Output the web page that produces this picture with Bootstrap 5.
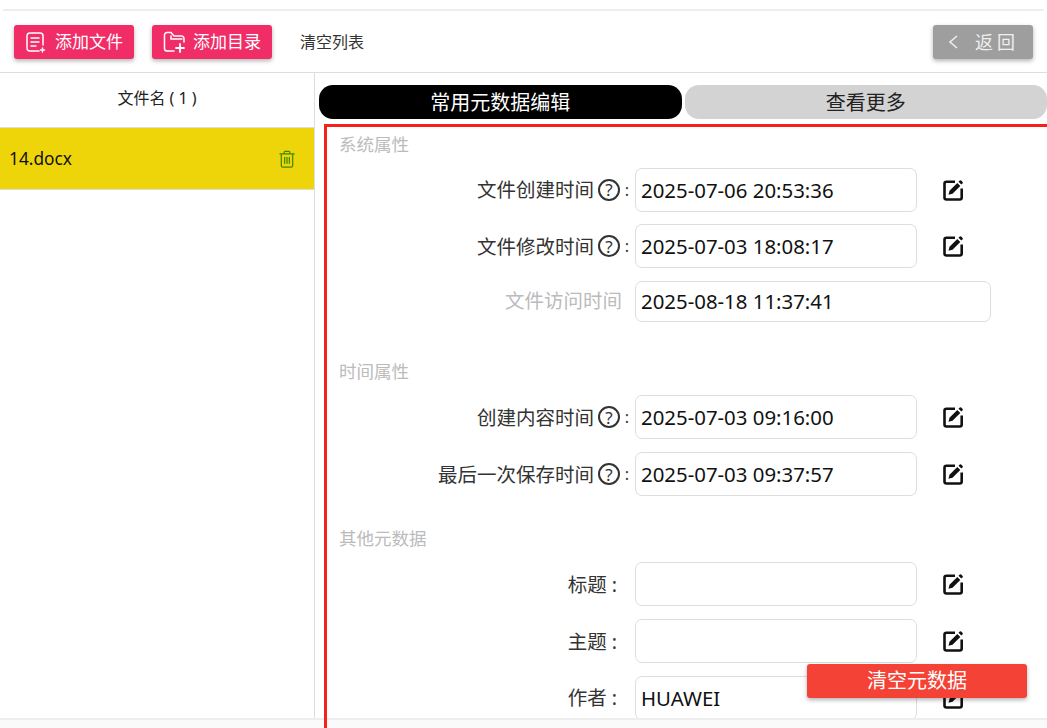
<!DOCTYPE html>
<html lang="zh">
<head>
<meta charset="utf-8">
<title>元数据编辑</title>
<link rel="stylesheet" href="https://cdn.jsdelivr.net/npm/bootstrap@5.3.0/dist/css/bootstrap.min.css">
<style>
html,body{height:728px;overflow:hidden;background:#fff}
body{font-family:"Noto Sans","Noto Sans CJK SC",sans-serif;color:#333}
.shell{height:728px;position:relative}
.top-strip{height:11px;margin:0 3px;border-bottom:2px solid #eee}
.tool-bar{height:62px;padding:0 14px;border-bottom:1px solid #ddd;gap:18px}
.act-btn{height:34px;padding:0 10px 0 11px;border:0;border-radius:3px;color:#fff;font-size:17px;box-shadow:0 2px 4px rgba(0,0,0,.3);line-height:1}
.act-btn:hover,.act-btn:active{color:#fff}
.act-pink,.act-pink:hover{background:#f02d67;width:120px}
.act-clear{font-size:16px;color:#333;padding:0;margin-left:10px;background:none;box-shadow:none;border:0}
.act-back,.act-back:hover{background:#9e9e9e;width:100px;margin-left:auto;letter-spacing:4px;padding:0;font-size:18px;color:#eee}
.work{height:645px}
.side{width:315px;flex:none;border-right:1px solid #ddd}
.side-head{height:54px;font-size:16px;color:#222;padding-bottom:4px}
.side-item{height:63px;background:#edd50a;padding:0 18px 0 9px;font-size:17.300px;color:#111;border-top:1px solid #ddd;border-bottom:1px solid #ddd}
.pane{flex:1;min-width:0;padding:12px 0 0 4px;overflow:hidden}
.tab-row{gap:3px;height:34px;margin-bottom:4.500px}
.tab-item{flex:1;border-radius:14px;font-size:20px;line-height:36px;height:34px;text-align:center}
.tab-on{background:#000;color:#fff}
.tab-off{background:#d3d3d3;color:#222}
.red-frame{border:3px solid #f5221b;margin-left:5px;margin-right:-60px;padding:6px 0 0 12px;height:700px}
.sect-name{height:22px;line-height:22px;font-size:17.500px;color:#bbb;margin-bottom:13px}
.meta-row{height:44px;margin-bottom:12.700px}
.meta-label{width:296px;flex:none;font-size:19.500px;color:#333;white-space:nowrap;justify-content:flex-end}
.lbl-help{padding-right:1px}
.lbl-plain{padding-right:18px}
.lbl-dim{color:#bbb;padding-right:13px}
.hint{width:22px;height:22px;border:2px solid #333;border-radius:50%;font-size:17px;line-height:1;margin-left:4px;flex:none}
.hint-colon{width:14px;text-align:center;font-size:16px}
.meta-input{width:282px;height:44px;flex:none;border:1px solid #ddd;border-radius:7px;padding:0 5px;font-size:20.400px;color:#111;font-family:inherit}
.meta-input:focus{border-color:#ddd;box-shadow:none}
.meta-wide{width:356px;height:41px;align-self:flex-start}
.edit-ico{width:22px;height:22px;margin-left:25px;flex:none}
.sec-two{margin-top:35.600px}
.sec-three{margin-top:31.300px}
.foot-bar{height:10px;border-top:2px solid #eee;background:#fafafa;padding-left:324px}
.red-tail{width:3px;height:10px;margin-top:-2px;background:#f5221b}
.clear-meta,.clear-meta:hover{position:absolute;left:807px;top:664px;width:220px;height:34px;background:#f44336;color:#fff;border:0;border-radius:3px;font-size:20px;line-height:1;padding:0;box-shadow:0 2px 4px rgba(0,0,0,.3)}
</style>
</head>
<body>
<svg width="0" height="0" class="d-block" aria-hidden="true">
<symbol id="pen" viewBox="0 0 22 22"><path d="M13 2.800H4.500a2 2 0 0 0-2 2v13.700a2 2 0 0 0 2 2h13.200a2 2 0 0 0 2-2V9.500" fill="none" stroke="#111" stroke-width="2.600"/><path d="M6.500 15.800l1-4 7.800-7.800 3 3-7.800 7.800z" fill="#111"/><path d="M16.500 2.800l1.300-1.300a1 1 0 0 1 1.400 0l1.400 1.400a1 1 0 0 1 0 1.400l-1.300 1.300z" fill="#111"/></symbol>
</svg>
<div class="shell d-flex flex-column">
  <div class="top-strip"></div>
  <div class="tool-bar d-flex align-items-center">
    <button class="btn act-btn act-pink d-flex align-items-center gap-2">
      <svg width="22" height="22" viewBox="0 0 22 22" fill="none" stroke="#fff" stroke-width="1.500" stroke-linecap="round"><path d="M14 20H5a3 3 0 0 1-3-3V4.500A3 3 0 0 1 5 2h10a3 3 0 0 1 3 3v9"/><path d="M6 7h8M6 11h8M6 15h5"/><path d="M17.500 17v4M15.500 19h4"/></svg>
      添加文件</button>
    <button class="btn act-btn act-pink d-flex align-items-center gap-2">
      <svg width="22" height="22" viewBox="0 0 22 22" fill="none" stroke="#fff" stroke-width="1.500" stroke-linecap="round"><path d="M11 20H4a2.500 2.500 0 0 1-2.500-2.500V4A2.500 2.500 0 0 1 4 1.500h4L11 5h7.500A2.500 2.500 0 0 1 21 7.500V11"/><path d="M8 5v3h11"/><path d="M17 13v8M13 17h8" stroke-width="1.800"/></svg>
      添加目录</button>
    <button class="btn act-clear">清空列表</button>
    <button class="btn act-btn act-back d-flex align-items-center justify-content-center">
      <svg width="12" height="16" viewBox="0 0 12 16" fill="none" stroke="#eee" stroke-width="1.600" class="me-3"><path d="M10 2L3 8l7 6"/></svg>返回</button>
  </div>
  <div class="work d-flex">
    <div class="side">
      <div class="side-head d-flex align-items-center justify-content-center">文件名 ( 1 )</div>
      <div class="side-item d-flex align-items-center justify-content-between">
        <span>14.docx</span>
        <svg width="18" height="18" viewBox="0 0 18 19" fill="none" stroke="#3c8c00" stroke-width="1.300"><path d="M1 4h16M6 4V2.500A1 1 0 0 1 7 1.500h4a1 1 0 0 1 1 1V4"/><path d="M3 4v12.500a1.500 1.500 0 0 0 1.500 1.500h9a1.500 1.500 0 0 0 1.500-1.500V4"/><path d="M6.500 7.500v7M9 7.500v7M11.500 7.500v7"/></svg>
      </div>
    </div>
    <div class="pane">
      <div class="tab-row d-flex">
        <div class="tab-item tab-on">常用元数据编辑</div>
        <div class="tab-item tab-off">查看更多</div>
      </div>
      <div class="red-frame">
        <div class="sect-name">系统属性</div>
        <div class="meta-row d-flex align-items-center">
          <div class="meta-label d-flex align-items-center lbl-help">文件创建时间<span class="hint d-flex align-items-center justify-content-center">?</span><span class="hint-colon">:</span></div>
          <input class="form-control meta-input" value="2025-07-06 20:53:36">
          <svg class="edit-ico"><use href="#pen"/></svg>
        </div>
        <div class="meta-row d-flex align-items-center">
          <div class="meta-label d-flex align-items-center lbl-help">文件修改时间<span class="hint d-flex align-items-center justify-content-center">?</span><span class="hint-colon">:</span></div>
          <input class="form-control meta-input" value="2025-07-03 18:08:17">
          <svg class="edit-ico"><use href="#pen"/></svg>
        </div>
        <div class="meta-row d-flex align-items-start">
          <div class="meta-label d-flex align-items-center lbl-dim h-100 pb-1">文件访问时间</div>
          <input class="form-control meta-input meta-wide" value="2025-08-18 11:37:41">
        </div>
        <div class="sect-name sec-two">时间属性</div>
        <div class="meta-row d-flex align-items-center">
          <div class="meta-label d-flex align-items-center lbl-help">创建内容时间<span class="hint d-flex align-items-center justify-content-center">?</span><span class="hint-colon">:</span></div>
          <input class="form-control meta-input" value="2025-07-03 09:16:00">
          <svg class="edit-ico"><use href="#pen"/></svg>
        </div>
        <div class="meta-row d-flex align-items-center">
          <div class="meta-label d-flex align-items-center lbl-help">最后一次保存时间<span class="hint d-flex align-items-center justify-content-center">?</span><span class="hint-colon">:</span></div>
          <input class="form-control meta-input" value="2025-07-03 09:37:57">
          <svg class="edit-ico"><use href="#pen"/></svg>
        </div>
        <div class="sect-name sec-three">其他元数据</div>
        <div class="meta-row d-flex align-items-center">
          <div class="meta-label d-flex align-items-center lbl-plain">标题 :</div>
          <input class="form-control meta-input" value="">
          <svg class="edit-ico"><use href="#pen"/></svg>
        </div>
        <div class="meta-row d-flex align-items-center">
          <div class="meta-label d-flex align-items-center lbl-plain">主题 :</div>
          <input class="form-control meta-input" value="">
          <svg class="edit-ico"><use href="#pen"/></svg>
        </div>
        <div class="meta-row d-flex align-items-center">
          <div class="meta-label d-flex align-items-center lbl-plain">作者 :</div>
          <input class="form-control meta-input" value="HUAWEI">
          <svg class="edit-ico"><use href="#pen"/></svg>
        </div>
      </div>
    </div>
  </div>
  <div class="foot-bar"><div class="red-tail"></div></div>
  <button class="btn clear-meta">清空元数据</button>
</div>
<script src="https://cdn.jsdelivr.net/npm/bootstrap@5.3.0/dist/js/bootstrap.bundle.min.js"></script>
</body>
</html>
